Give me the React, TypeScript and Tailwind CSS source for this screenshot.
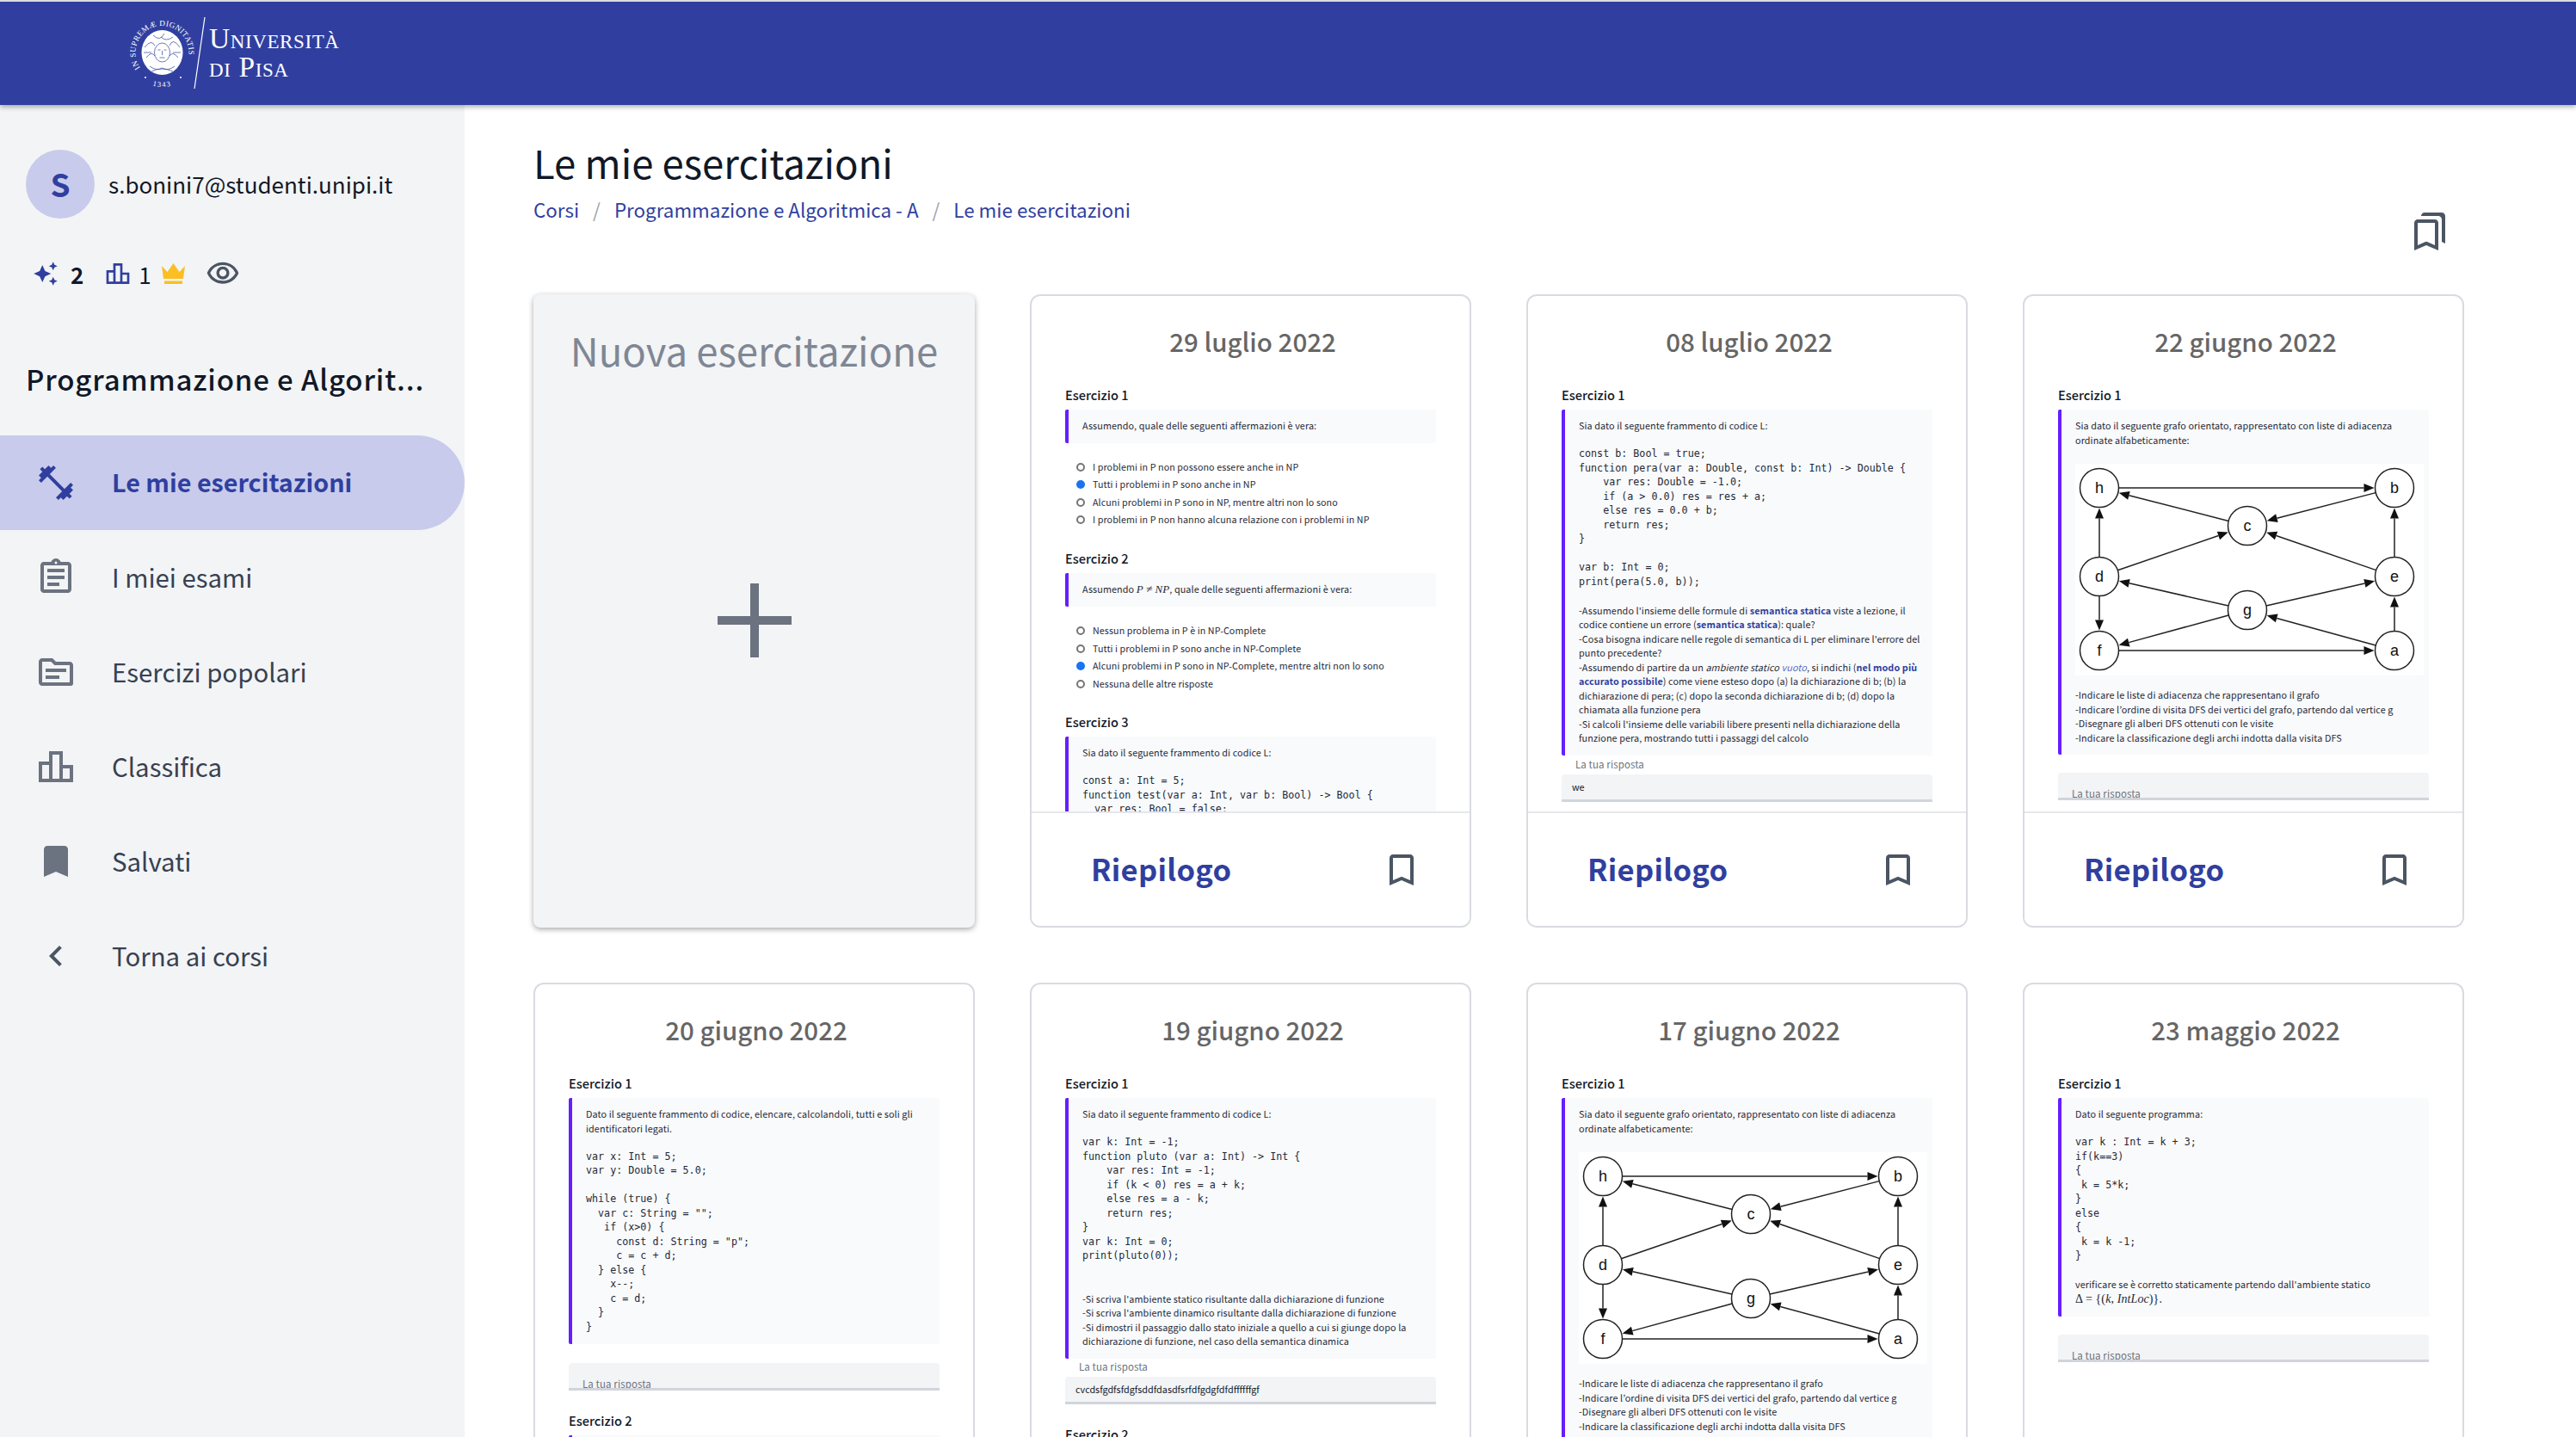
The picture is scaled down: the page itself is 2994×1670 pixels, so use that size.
import React from "react";
import {
  MdFitnessCenter, MdOutlineAssignment, MdOutlineTopic, MdOutlineLeaderboard, MdBookmark,
  MdChevronLeft, MdOutlineBookmarkBorder, MdOutlineBookmarks, MdOutlineVisibility, MdAutoAwesome,
} from "react-icons/md";

const nodes: Record<string, [number, number]> = {
  h: [28, 28], b: [371, 28], c: [200, 72], d: [28, 131], e: [371, 131], g: [200, 170], f: [28, 217], a: [371, 217],
};
const edges = ["hb", "bc", "ch", "dh", "dc", "ec", "eb", "df", "gd", "ge", "gf", "ag", "ae", "fa"];

function Graph() {
  const R = 22.5;
  return (
    <svg viewBox="0 0 405 246" className="block w-[405px] h-[246px] bg-white mt-[20px] mb-[14px]">
      {edges.map((k) => {
        const [x1, y1] = nodes[k[0]];
        const [x2, y2] = nodes[k[1]];
        const len = Math.hypot(x2 - x1, y2 - y1);
        const ux = (x2 - x1) / len;
        const uy = (y2 - y1) / len;
        const sx = x1 + ux * R, sy = y1 + uy * R, ex = x2 - ux * (R + 1), ey = y2 - uy * (R + 1);
        const bx = ex - ux * 12, by = ey - uy * 12;
        return (
          <g key={k}>
            <line x1={sx} y1={sy} x2={bx} y2={by} stroke="#222" strokeWidth="1.5" />
            <polygon points={`${ex},${ey} ${bx - uy * 5},${by + ux * 5} ${bx + uy * 5},${by - ux * 5}`} fill="#111" />
          </g>
        );
      })}
      {Object.entries(nodes).map(([k, [x, y]]) => (
        <g key={k}>
          <circle cx={x} cy={y} r={R} fill="white" stroke="#222" strokeWidth="1.5" />
          <text x={x} y={y + 6} textAnchor="middle" fontSize="18" fontFamily="Liberation Sans, sans-serif" fill="#111">{k}</text>
        </g>
      ))}
    </svg>
  );
}

function Seal() {
  return (
    <svg viewBox="0 0 92 90" className="w-[92px] h-[90px] shrink-0">
      <defs>
        <path id="sealArc" d="M 12.1 61.8 A 31 31 0 1 1 62.9 61.8" fill="none" />
        <path id="sealYear" d="M 15.5 77.4 A 40 40 0 0 0 59.5 77.4" fill="none" />
      </defs>
      <text fontSize="9.2" fill="white" fontFamily="Liberation Serif, serif" letterSpacing="0.45">
        <textPath href="#sealArc" startOffset="0%">IN SUPREMÆ DIGNITATIS</textPath>
      </text>
      <text fontSize="8.5" fill="white" fontFamily="Liberation Serif, serif" letterSpacing="1.4" textAnchor="middle">
        <textPath href="#sealYear" startOffset="50%">1343</textPath>
      </text>
      <circle cx="18" cy="73" r="1" fill="white" />
      <circle cx="59" cy="73" r="1" fill="white" />
      <ellipse cx="37.5" cy="44" rx="24" ry="26" fill="white" />
      <g fill="none" stroke="#303f9f" strokeWidth="0.7">
        <path d="M17 38 Q25 28 29 36 M19 50 Q25 42 29 48 M58 38 Q50 26 46 36 M56 50 Q50 42 46 48 M23 60 Q31 66 37.5 62 Q44 66 52 60 M27 24 Q35 32 40 22 M36 26 Q42 32 50 26 M16 44 H25 M50 44 H59 M25 66 Q37 60 50 66" />
        <ellipse cx="37.5" cy="44" rx="9" ry="11" />
        <path d="M32.5 41 h3 M39.5 41 h3 M37.5 42 v5 M34.5 50 h6" />
      </g>
      <line x1="87" y1="3" x2="75" y2="86" stroke="white" strokeWidth="1.2" />
    </svg>
  );
}

function Crown() {
  return (
    <svg viewBox="0 0 27 25" className="w-[27px] h-[25px] ml-[12px]">
      <path d="M0 3 L6.5 10 L13.5 0 L20.5 10 L27 3 L25 18 H2 Z" fill="#fbbf24" />
      <rect x="3" y="20.5" width="21" height="3.5" fill="#fbbf24" />
    </svg>
  );
}

const Ex = ({ n, className = "" }: { n: number; className?: string }) => (
  <div className={`text-[14.6px] leading-[24px] font-medium text-[#111827] mb-[5px] ${className}`}>Esercizio {n}</div>
);

const Block = ({ children, className = "" }: { children: React.ReactNode; className?: string }) => (
  <div className={`border-l-4 border-[#651fff] bg-[#f9fafb] rounded-[2px] pl-4 pr-2 pt-[10px] pb-[12px] text-[10.8px] leading-[16.5px] text-[#1f2937] tracking-[0.1px] ${className}`}>
    {children}
  </div>
);

const Code = ({ lines }: { lines: string[] }) => (
  <pre className="font-['DejaVu_Sans_Mono','Liberation_Mono',monospace] text-[11.7px] leading-[16.5px] text-[#1f2937] tracking-normal m-0">
    {lines.join("\n")}
  </pre>
);

const Gap = () => <div className="h-[16.5px]" />;

const Radio = ({ on, children }: { on?: boolean; children: React.ReactNode }) => (
  <div className="flex items-center h-[20.5px] pl-[13px] gap-[9px] text-[10.7px] tracking-[0.1px] text-[#1f2937]">
    <span className={`w-[10px] h-[10px] rounded-full shrink-0 ${on ? "bg-[#1a73f0]" : "border-2 border-[#757575] bg-white"}`} />
    <span>{children}</span>
  </div>
);

const EmptyAnswer = ({ className = "" }: { className?: string }) => (
  <div className={`h-[32px] bg-[#f3f4f6] rounded-t-[4px] border-b-[3px] border-[#d1d5db] overflow-hidden pl-4 pt-[15px] text-[11.5px] leading-[18px] text-[#6b7280] tracking-[0.1px] ${className}`}>
    La tua risposta
  </div>
);

const FilledAnswer = ({ value }: { value: string }) => (
  <div>
    <div className="pl-4 h-[21px] text-[11.5px] leading-[18px] text-[#6b7280] tracking-[0.1px]">La tua risposta</div>
    <div className="h-[32px] bg-[#f3f4f6] rounded-t-[4px] border-b-[3px] border-[#d1d5db] px-3 text-[10.8px] leading-[28px] text-[#111827]">{value}</div>
  </div>
);

const B = ({ children }: { children: React.ReactNode }) => <b className="font-bold text-[#303f9f]">{children}</b>;

const GraphBlock = () => (
  <Block>
    Sia dato il seguente grafo orientato, rappresentato con liste di adiacenza<br />
    ordinate alfabeticamente:
    <Graph />
    -Indicare le liste di adiacenza che rappresentano il grafo<br />
    -Indicare l’ordine di visita DFS dei vertici del grafo, partendo dal vertice g<br />
    -Disegnare gli alberi DFS ottenuti con le visite<br />
    -Indicare la classificazione degli archi indotta dalla visita DFS
  </Block>
);

const Formula = ({ children }: { children: React.ReactNode }) => (
  <span className="font-['Liberation_Serif',serif] italic text-[13px]">{children}</span>
);

const cards: { date: string; body: React.ReactNode }[] = [
  {
    date: "29 luglio 2022",
    body: (
      <>
        <Ex n={1} />
        <Block>Assumendo, quale delle seguenti affermazioni è vera:</Block>
        <div className="mt-[18px]">
          <Radio>I problemi in P non possono essere anche in NP</Radio>
          <Radio on>Tutti i problemi in P sono anche in NP</Radio>
          <Radio>Alcuni problemi in P sono in NP, mentre altri non lo sono</Radio>
          <Radio>I problemi in P non hanno alcuna relazione con i problemi in NP</Radio>
        </div>
        <Ex n={2} className="mt-[22px]" />
        <Block>Assumendo <Formula>P ≠ NP</Formula>, quale delle seguenti affermazioni è vera:</Block>
        <div className="mt-[18px]">
          <Radio>Nessun problema in P è in NP-Complete</Radio>
          <Radio>Tutti i problemi in P sono anche in NP-Complete</Radio>
          <Radio on>Alcuni problemi in P sono in NP-Complete, mentre altri non lo sono</Radio>
          <Radio>Nessuna delle altre risposte</Radio>
        </div>
        <Ex n={3} className="mt-[22px]" />
        <Block>
          Sia dato il seguente frammento di codice L:
          <Gap />
          <Code lines={["const a: Int = 5;", "function test(var a: Int, var b: Bool) -> Bool {", "  var res: Bool = false;", "  return res;", "}"]} />
        </Block>
      </>
    ),
  },
  {
    date: "08 luglio 2022",
    body: (
      <>
        <Ex n={1} />
        <Block>
          Sia dato il seguente frammento di codice L:
          <Gap />
          <Code lines={["const b: Bool = true;", "function pera(var a: Double, const b: Int) -> Double {", "    var res: Double = -1.0;", "    if (a > 0.0) res = res + a;", "    else res = 0.0 + b;", "    return res;", "}", "", "var b: Int = 0;", "print(pera(5.0, b));"]} />
          <Gap />
          -Assumendo l'insieme delle formule di <B>semantica statica</B> viste a lezione, il<br />
          codice contiene un errore (<B>semantica statica</B>): quale?<br />
          -Cosa bisogna indicare nelle regole di semantica di L per eliminare l'errore del<br />
          punto precedente?<br />
          -Assumendo di partire da un <i>ambiente statico</i> <i className="text-[#5c6bc0]">vuoto</i>, si indichi (<B>nel modo più</B><br />
          <B>accurato possibile</B>) come viene esteso dopo (a) la dichiarazione di b; (b) la<br />
          dichiarazione di pera; (c) dopo la seconda dichiarazione di b; (d) dopo la<br />
          chiamata alla funzione pera<br />
          -Si calcoli l'insieme delle variabili libere presenti nella dichiarazione della<br />
          funzione pera, mostrando tutti i passaggi del calcolo
        </Block>
        <div className="mt-[1px]"><FilledAnswer value="we" /></div>
      </>
    ),
  },
  {
    date: "22 giugno 2022",
    body: (
      <>
        <Ex n={1} />
        <GraphBlock />
        <EmptyAnswer className="mt-[21px]" />
      </>
    ),
  },
  {
    date: "20 giugno 2022",
    body: (
      <>
        <Ex n={1} />
        <Block>
          Dato il seguente frammento di codice, elencare, calcolandoli, tutti e soli gli<br />
          identificatori legati.
          <Gap />
          <Code lines={["var x: Int = 5;", "var y: Double = 5.0;", "", "while (true) {", "  var c: String = \"\";", "   if (x>0) {", "     const d: String = \"p\";", "     c = c + d;", "  } else {", "    x--;", "    c = d;", "  }", "}"]} />
        </Block>
        <EmptyAnswer className="mt-[22px]" />
        <Ex n={2} className="mt-[23px]" />
        <Block>Sia dato il seguente frammento</Block>
      </>
    ),
  },
  {
    date: "19 giugno 2022",
    body: (
      <>
        <Ex n={1} />
        <Block>
          Sia dato il seguente frammento di codice L:
          <Gap />
          <Code lines={["var k: Int = -1;", "function pluto (var a: Int) -> Int {", "    var res: Int = -1;", "    if (k < 0) res = a + k;", "    else res = a - k;", "    return res;", "}", "var k: Int = 0;", "print(pluto(0));", "", "", ""]} />
          -Si scriva l'ambiente statico risultante dalla dichiarazione di funzione<br />
          -Si scriva l'ambiente dinamico risultante dalla dichiarazione di funzione<br />
          -Si dimostri il passaggio dallo stato iniziale a quello a cui si giunge dopo la<br />
          dichiarazione di funzione, nel caso della semantica dinamica
        </Block>
        <FilledAnswer value="cvcdsfgdfsfdgfsddfdasdfsrfdfgdgfdfdffffffgf" />
        <Ex n={2} className="mt-[23px]" />
      </>
    ),
  },
  {
    date: "17 giugno 2022",
    body: (
      <>
        <Ex n={1} />
        <GraphBlock />
      </>
    ),
  },
  {
    date: "23 maggio 2022",
    body: (
      <>
        <Ex n={1} />
        <Block>
          Dato il seguente programma:
          <Gap />
          <Code lines={["var k : Int = k + 3;", "if(k==3)", "{", " k = 5*k;", "}", "else", "{", " k = k -1;", "}"]} />
          <Gap />
          verificare se è corretto staticamente partendo dall'ambiente statico<br />
          <span className="font-['Liberation_Serif',serif] text-[14px]">Δ = {"{"}(<i>k</i>, <i>IntLoc</i>){"}"}.</span>
        </Block>
        <EmptyAnswer className="mt-[21px]" />
      </>
    ),
  },
];

function Card({ date, body }: { date: string; body: React.ReactNode }) {
  return (
    <div className="h-[736px] rounded-xl border-2 border-[#d9dbe1] bg-white flex flex-col overflow-hidden">
      <div className="flex-1 min-h-0 overflow-hidden px-[39px] pt-[28px]">
        <div className="text-center pl-[5px] text-[29.5px] leading-[48px] font-medium text-[#666666] mb-[27px]">{date}</div>
        {body}
      </div>
      <div className="h-[133px] shrink-0 border-t-2 border-[#e5e7eb] flex items-center justify-between pl-[69px] pr-[55px] bg-white">
        <span className="text-[34.5px] leading-[48px] font-semibold text-[#303f9f] tracking-[0.3px] mb-[3px]">Riepilogo</span>
        <MdOutlineBookmarkBorder size={48} className="text-[#4b5563]" />
      </div>
    </div>
  );
}

function NavItem({ icon, label, active, dark }: { icon: React.ReactNode; label: string; active?: boolean; dark?: boolean }) {
  return (
    <div className={`h-[110px] flex items-center pl-[41px] ${active ? "bg-[#c8cbeb] rounded-r-full text-[#303f9f] font-semibold" : "text-[#374151]"}`}>
      <span className={`w-[48px] h-[48px] shrink-0 mr-[41px] ${active ? "text-[#303f9f]" : dark ? "text-[#4b5563]" : "text-[#6b7280]"}`}>{icon}</span>
      <span className={`leading-[40px] mb-[3px] ${active ? "text-[28.7px]" : "text-[29.4px]"}`}>{label}</span>
    </div>
  );
}

export default function App() {
  return (
    <div className="h-[1670px] w-[2994px] overflow-hidden flex flex-col bg-white font-['Noto_Sans_CJK_JP','Noto_Sans',sans-serif]">
      <header className="h-[122px] shrink-0 border-t-2 border-[#dcdcdc] bg-[#303f9f] shadow-[0_2px_6px_rgba(0,0,0,0.35)] flex items-center pl-[151px] relative z-10">
        <Seal />
        <div className="mb-[2px] font-['Liberation_Serif',serif] text-white [font-variant:small-caps] text-[33.5px] leading-[33px] tracking-[0.6px]">
          <div>Università</div>
          <div>di Pisa</div>
        </div>
      </header>
      <div className="flex-1 min-h-0 flex">
        <aside className="w-[540px] shrink-0 bg-[#f3f4f6] pt-[52px]">
          <div className="flex items-center pl-[30px]">
            <div className="w-[80px] h-[80px] rounded-full bg-[#c8cbeb] text-[#303f9f] font-bold text-[37px] flex items-center justify-center">S</div>
            <div className="ml-[16px] text-[26px] leading-[40px] text-[#111827]">s.bonini7@studenti.unipi.it</div>
          </div>
          <div className="flex items-center pl-[38px] mt-[44px] h-[40px] text-[26px] text-[#111827]">
            <MdAutoAwesome size={30} className="text-[#303f9f]" />
            <span className="ml-[14px] font-bold">2</span>
            <MdOutlineLeaderboard size={32} className="text-[#303f9f] ml-[24px]" />
            <span className="ml-[8px]">1</span>
            <Crown />
            <MdOutlineVisibility size={40} className="text-[#4b5563] ml-[24px]" />
          </div>
          <div className="pl-[30px] mt-[79px] whitespace-nowrap text-[33px] leading-[46px] font-medium text-[#111827] tracking-[0.85px]">
            Programmazione e Algorit...
          </div>
          <nav className="mt-[43px]">
            <NavItem active icon={<MdFitnessCenter size={48} />} label="Le mie esercitazioni" />
            <NavItem icon={<MdOutlineAssignment size={48} />} label="I miei esami" />
            <NavItem icon={<MdOutlineTopic size={48} />} label="Esercizi popolari" />
            <NavItem icon={<MdOutlineLeaderboard size={48} />} label="Classifica" />
            <NavItem icon={<MdBookmark size={48} />} label="Salvati" />
            <NavItem dark icon={<MdChevronLeft size={48} />} label="Torna ai corsi" />
          </nav>
        </aside>
        <main className="flex-1 min-w-0 pl-[80px] pt-[38px]">
          <div className="w-[2244px] flex justify-between items-end">
            <div>
              <h1 className="text-[45.5px] leading-[56px] font-normal text-[#111827]">Le mie esercitazioni</h1>
              <div className="mt-[9px] flex items-center text-[22.4px] leading-[36px] text-[#303f9f]">
                <span>Corsi</span>
                <span className="mx-[16px] text-[#9ca3af]">/</span>
                <span>Programmazione e Algoritmica - A</span>
                <span className="mx-[16px] text-[#9ca3af]">/</span>
                <span>Le mie esercitazioni</span>
              </div>
            </div>
            <MdOutlineBookmarks size={48} className="text-[#4b5563] mr-[16px] mb-[-32px]" />
          </div>
          <div className="mt-[81px] w-[2244px] grid grid-cols-4 gap-x-[64px] gap-y-[64px]">
            <div className="h-[736px] rounded-lg bg-[#f3f4f6] shadow-[0_2px_6px_rgba(0,0,0,0.35)] flex flex-col items-center pt-[34px]">
              <div className="text-[45.5px] leading-[60px] text-[#7f8794]">Nuova esercitazione</div>
              <div className="flex-1 flex items-center justify-center pb-[72px]">
                <div className="relative w-[86px] h-[86px]">
                  <div className="absolute left-[38px] top-0 w-[10px] h-[86px] bg-[#6b7280]" />
                  <div className="absolute top-[38px] left-0 h-[10px] w-[86px] bg-[#6b7280]" />
                </div>
              </div>
            </div>
            {cards.map((c) => <Card key={c.date} {...c} />)}
          </div>
        </main>
      </div>
    </div>
  );
}
